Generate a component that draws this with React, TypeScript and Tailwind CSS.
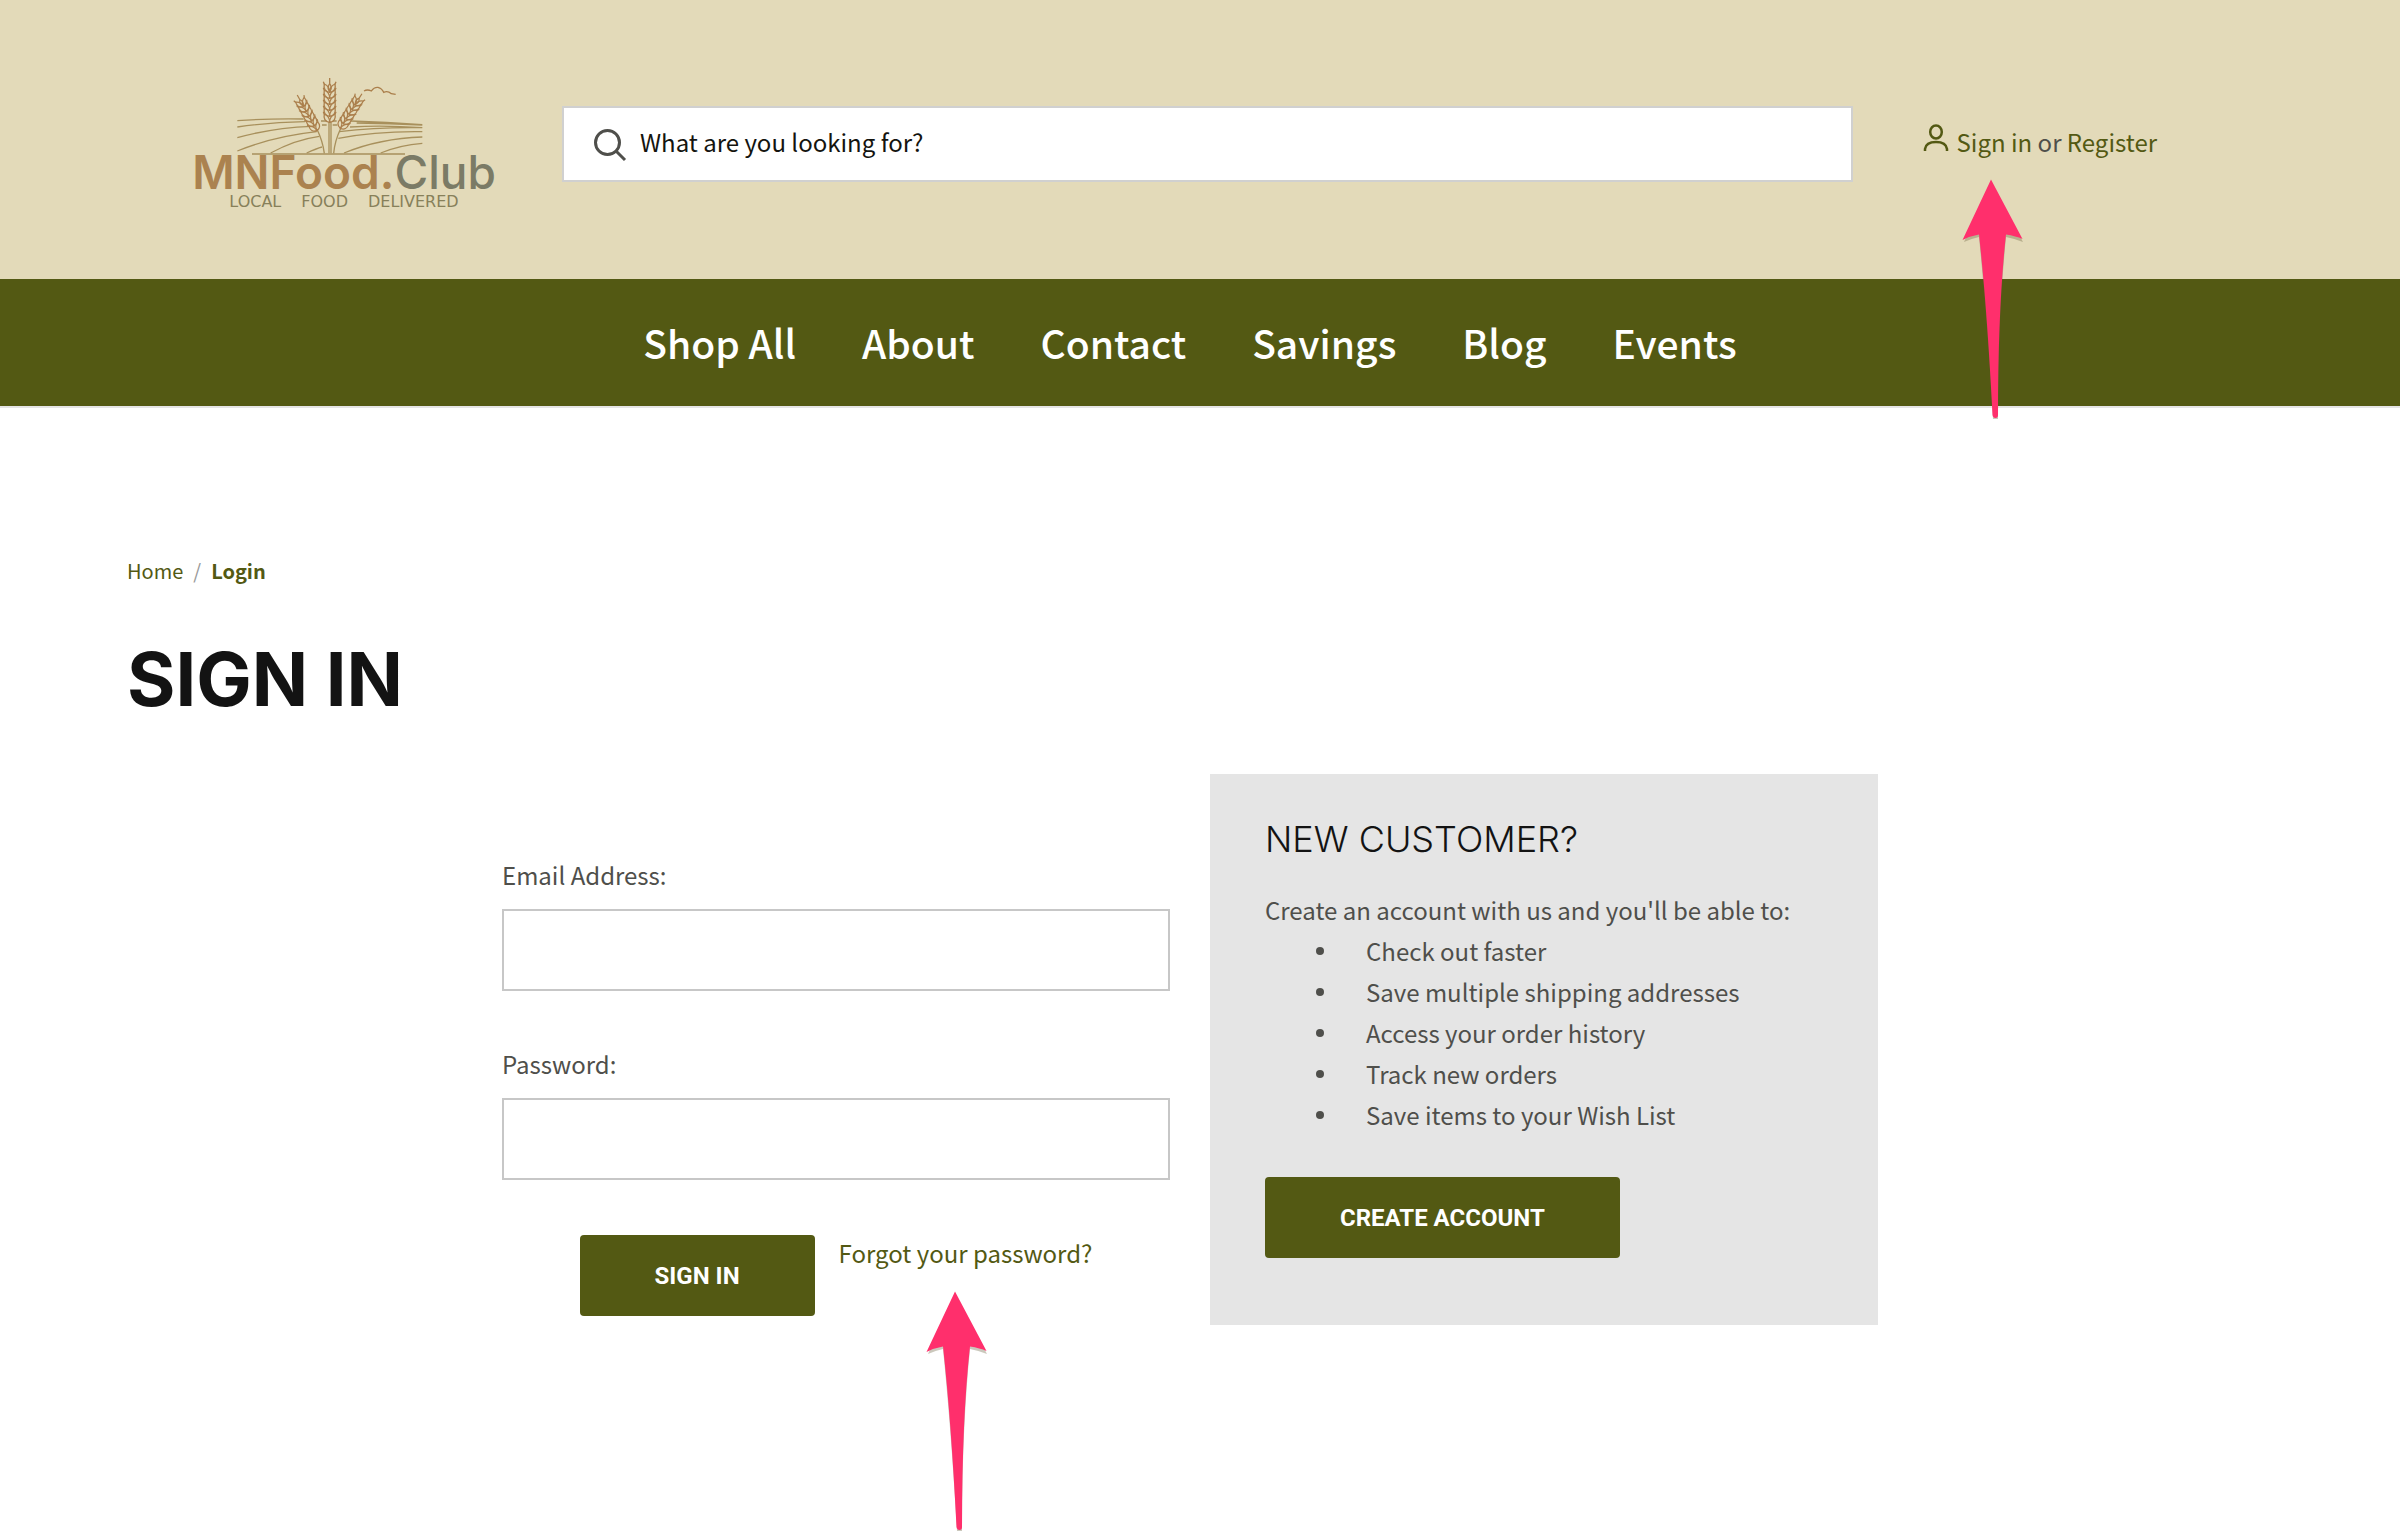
import type { ReactNode } from 'react';

const navItems = ['Shop All', 'About', 'Contact', 'Savings', 'Blog', 'Events'];

const benefits = [
  'Check out faster',
  'Save multiple shipping addresses',
  'Access your order history',
  'Track new orders',
  'Save items to your Wish List',
];

const kernelRows = [0, 18, 36, 54, 72, 90];

function Ear({ transform }: { transform: string }) {
  return (
    <g transform={transform}>
      {kernelRows.map((y) => (
        <g key={y} transform={`translate(0 ${-y})`}>
          <path d="M0 0C-14 -2 -19 -12 -16 -25C-6 -21 0 -12 0 0Z" />
          <path d="M0 0C14 -2 19 -12 16 -25C6 -21 0 -12 0 0Z" />
          <path d="M-16 -24L-19 -32M16 -24L19 -32" />
        </g>
      ))}
      <path d="M0 -92C-6 -100 -6 -108 0 -116C6 -108 6 -100 0 -92ZM0 -116V-133" />
    </g>
  );
}

function Logo() {
  return (
    <a href="#home" aria-label="MNFood.Club" className="flex w-[320px] shrink-0 flex-col items-center pt-0.5">
      <svg viewBox="42 48 960 237" className="h-[79px] w-[320px]" fill="none" stroke="#a8905c" strokeWidth="4">
        {/* Field rows */}
        <path d="M202 179Q300 172 401 174M202 198Q300 184 405 182M202 230Q310 200 425 196M202 270Q310 226 440 212" />
        <path d="M302 276Q375 236 448 226M410 276Q440 262 456 258M543 180Q650 184 757 191M560 186Q660 187 757 192" />
        <path d="M540 198Q640 192 757 200M508 212Q620 198 757 200M505 232Q620 210 757 212M522 276Q630 232 757 228M632 276Q690 252 757 247" />
        <path d="M453 180H470M488 180H500M456 192H470M488 192H502M246 279H705" />
        <path d="M582 90Q592 84 604 90Q612 78 624 79Q636 82 641 94Q653 88 664 98L677 100" stroke="#ab7f4c" />
        <path d="M477 183V277M483 183V277M441 205Q458 240 463 277M513 200Q494 240 491 277" />
        <g stroke="#ab7f4c" strokeWidth="4">
          <Ear transform="translate(479 184)" />
          <Ear transform="translate(441 209) rotate(-29) scale(.92)" />
          <Ear transform="translate(511 202) rotate(32) scale(.92)" />
        </g>
      </svg>
      <span className="font-['Inter',sans-serif] text-[46px] leading-8 font-semibold text-[#ab824f]">
        MNFood.<span className="font-medium text-[#7b7b66]">Club</span>
      </span>
      <span className="flex gap-5 pt-1 font-['DejaVu_Sans',sans-serif] text-base leading-5 text-[#87805a]">
        <span>LOCAL</span>
        <span>FOOD</span>
        <span>DELIVERED</span>
      </span>
    </a>
  );
}

function Arrow({ className }: { className: string }) {
  return (
    <svg
      viewBox="0 0 66 243"
      className={`pointer-events-none absolute h-[243px] w-[66px] ${className}`}
      aria-hidden="true"
    >
      <path
        d="M31 5L4 65Q10 62 19 60Q27 140 33 242H38Q38 140 46 60Q56 62 63 65Z"
        fill="#6b6040"
        opacity=".35"
      />
      <path d="M31 2.500L2.500 63Q10 59 19 57.500Q27 130 32.500 238Q33 241 35.500 241Q38 241 38 238Q38 130 46 57.500Q56 59 62.500 62Z" fill="#ff2f6c" />
    </svg>
  );
}

function Field({ id, label, type }: { id: string; label: string; type: string }) {
  return (
    <div>
      <label htmlFor={id} className="block text-2xl leading-9">
        {label}
      </label>
      <input
        id={id}
        type={type}
        className="mt-4 block h-[82px] w-full border-2 border-[#c7c7c7] bg-white px-6 text-2xl outline-none"
      />
    </div>
  );
}

function PrimaryButton({ type, children }: { type: 'button' | 'submit'; children: ReactNode }) {
  return (
    <button
      type={type}
      className="h-[81px] rounded bg-[#535913] px-[75px] font-['Roboto',sans-serif] text-2xl font-bold whitespace-nowrap text-white"
    >
      {children}
    </button>
  );
}

export default function App() {
  return (
    <div className="min-h-screen overflow-hidden bg-white font-['Noto_Sans_CJK_SC',sans-serif] text-[#4f4f4b]">
      {/* Header */}
      <header className="flex items-center bg-[#e3dab9] pt-[75px] pr-[243px] pb-[67px] pl-[184px]">
        <Logo />
        <div className="relative ml-[58px] flex-1">
          <svg
            viewBox="0 0 34 34"
            className="absolute top-[22px] left-[31px] size-[34px]"
            fill="none"
            stroke="#4f4f4b"
            strokeWidth="3"
            aria-hidden="true"
          >
            <circle cx="14.500" cy="14.500" r="12" />
            <path d="M23 23L32 32" />
          </svg>
          <input
            type="search"
            aria-label="Search"
            placeholder="What are you looking for?"
            className="block h-[76px] w-full border-2 border-[#d0d0d0] bg-white pb-1 pl-[76px] text-2xl outline-none placeholder:text-[#14140f] placeholder:opacity-100"
          />
        </div>
        <div className="relative ml-[70px] flex shrink-0 items-center gap-2 pb-1 text-2xl">
          <svg
            viewBox="0 0 26 28"
            className="mb-2 h-7 w-[26px]"
            fill="none"
            stroke="#535913"
            strokeWidth="2.500"
            aria-hidden="true"
          >
            <ellipse cx="13" cy="8" rx="5.800" ry="6.500" />
            <path d="M2 27V25Q3 18 13 18Q23 18 24 25V27" />
          </svg>
          <p className="whitespace-nowrap">
            <a href="#signin" className="text-[#535913]">Sign in</a> or{' '}
            <a href="#register" className="text-[#535913]">Register</a>
          </p>
          <Arrow className="top-[53px] left-[37px]" />
        </div>
      </header>

      {/* Navigation */}
      <nav className="flex justify-center gap-[66px] border-b-2 border-[#e5e5e5] bg-[#535913] pt-[31px] pb-8 pr-5 text-[39px] leading-[64px] font-medium text-white">
        {navItems.map((item) => (
          <a key={item} href="#shop">
            {item}
          </a>
        ))}
      </nav>

      <main className="pt-[143px] pr-[147px] pl-[127px]">
        {/* Breadcrumb */}
        <ol className="flex gap-2.5 text-xl leading-10">
          <li>
            <a href="#home" className="text-[#535913]">Home</a>
          </li>
          <li className="text-[#999]">/</li>
          <li className="font-bold text-[#535913]">Login</li>
        </ol>

        <h1 className="mt-[38px] font-['Inter',sans-serif] text-[74px] leading-[100px] font-bold text-[#131313]">SIGN IN</h1>

        <div className="mx-auto mt-[45px] grid max-w-[1376px] grid-cols-2 items-start gap-10">
          <form className="flex flex-col gap-[55px] pt-[83px]">
            <Field id="email" label="Email Address:" type="email" />
            <Field id="password" label="Password:" type="password" />
            <div className="flex items-start justify-center gap-6">
              <PrimaryButton type="submit">SIGN IN</PrimaryButton>
              <div className="relative">
                <a href="#forgot" className="block text-2xl leading-9 text-[#535913]">
                  Forgot your password?
                </a>
                <Arrow className="top-[54px] left-[85px]" />
              </div>
            </div>
          </form>

          {/* New customer panel */}
          <section className="bg-[#e5e5e5] px-[55px] pt-10 pb-[67px]">
            <h2 className="font-['Inter',sans-serif] text-4xl leading-[50px] font-light text-[#131313]">
              NEW CUSTOMER?
            </h2>
            <p className="mt-[26px] text-2xl leading-10">Create an account with us and you'll be able to:</p>
            <ul className="mb-[42px] pl-[51px] text-2xl leading-[41px]">
              {benefits.map((item) => (
                <li key={item} className="flex items-center gap-[42px]">
                  <span className="size-2 rounded-full bg-[#4f4f4b]" />
                  {item}
                </li>
              ))}
            </ul>
            <PrimaryButton type="button">CREATE ACCOUNT</PrimaryButton>
          </section>
        </div>
      </main>
    </div>
  );
}
